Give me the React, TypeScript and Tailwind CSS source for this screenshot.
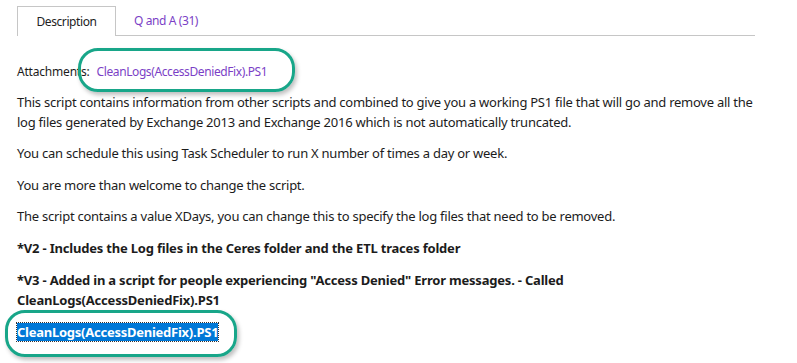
export default function App() {
  return (
    <div className="relative h-[363px] w-[797px] overflow-hidden bg-white font-['Noto_Sans',sans-serif] text-[13px] tracking-[-0.25px] text-[#1c1c1c]">
      <div className="flex items-stretch pl-[17px] pr-[42px] pt-[6px] text-[12px] tracking-[-0.4px]">
        <div className="flex h-[30px] w-[99px] items-center justify-center border-l border-r border-t border-[#c6c6c6] text-[#222]">
          Description
        </div>
        <div className="flex h-[30px] flex-1 items-center border-b border-[#c6c6c6] pl-[18px] text-[#7b3fc6]">
          Q and A (31)
        </div>
      </div>

      <div className="pl-[17px] leading-[20px]">
        <p className="mt-[26px] text-[12px] tracking-[-0.2px]">
          Attachments:
          <span className="ml-[7px] tracking-[-0.4px] text-[#7b3fc6]">CleanLogs(AccessDeniedFix).PS1</span>
        </p>
        <p className="mt-[10px] whitespace-nowrap">
          This script contains information from other scripts and combined to give you a working PS1 file that will go and remove all the
          <br />
          log files generated by Exchange 2013 and Exchange 2016 which is not automatically truncated.
        </p>
        <p className="mt-[11px]">You can schedule this using Task Scheduler to run X number of times a day or week.</p>
        <p className="mt-[12px]">You are more than welcome to change the script.</p>
        <p className="mt-[11px]">The script contains a value XDays, you can change this to specify the log files that need to be removed.</p>
        <p className="mt-[12px] font-bold tracking-[-0.2px]">*V2 - Includes the Log files in the Ceres folder and the ETL traces folder</p>
        <p className="mt-[12px] font-bold tracking-[-0.2px]">
          *V3 - Added in a script for people experiencing "Access Denied" Error messages. - Called
          <br />
          CleanLogs(AccessDeniedFix).PS1
        </p>
        <p className="mt-[12px] font-bold tracking-[-0.25px]">
          <span className="bg-[#0078d7] text-white outline-1 outline-dotted outline-[#333]">CleanLogs(AccessDeniedFix).PS1</span>
        </p>
      </div>

      <div className="absolute left-[78px] top-[48px] h-[44px] w-[217px] rounded-[20px] border-[3px] border-[#18a689] shadow-[2px_3px_4px_rgba(0,0,0,0.25)]" />
      <div className="absolute left-[5px] top-[310px] h-[47px] w-[232px] rounded-[20px] border-[3px] border-[#18a689] shadow-[2px_3px_4px_rgba(0,0,0,0.25)]" />
    </div>
  );
}
